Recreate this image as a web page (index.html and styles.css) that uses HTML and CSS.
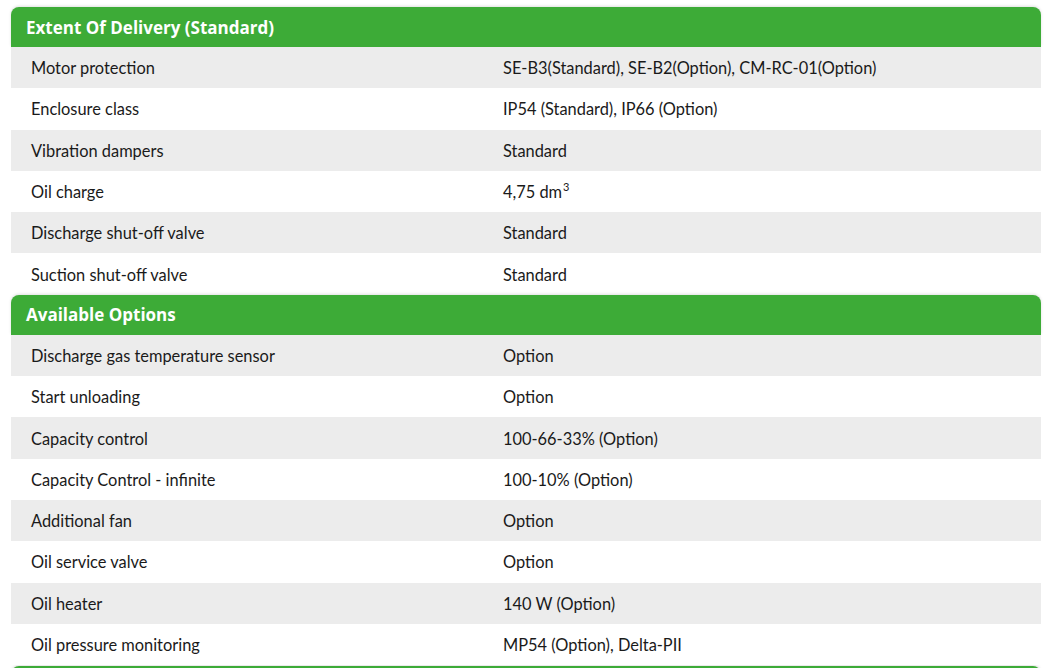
FILE: index.html
```html
<!DOCTYPE html>
<html lang="en">
<head>
<meta charset="utf-8">
<title>Specifications</title>
<link rel="stylesheet" href="styles.css">
</head>
<body>
<div class="page">
  <section class="spec">
    <h2 class="spec-head">Extent Of Delivery (Standard)</h2>
    <div class="row alt"><div class="label">Motor protection</div><div class="value">SE-B3(Standard), SE-B2(Option), CM-RC-01(Option)</div></div>
    <div class="row"><div class="label">Enclosure class</div><div class="value">IP54 (Standard), IP66 (Option)</div></div>
    <div class="row alt"><div class="label">Vibration dampers</div><div class="value">Standard</div></div>
    <div class="row"><div class="label">Oil charge</div><div class="value">4,75 dm<sup>3</sup></div></div>
    <div class="row alt"><div class="label">Discharge shut-off valve</div><div class="value">Standard</div></div>
    <div class="row"><div class="label">Suction shut-off valve</div><div class="value">Standard</div></div>
  </section>
  <section class="spec">
    <h2 class="spec-head">Available Options</h2>
    <div class="row alt"><div class="label">Discharge gas temperature sensor</div><div class="value">Option</div></div>
    <div class="row"><div class="label">Start unloading</div><div class="value">Option</div></div>
    <div class="row alt"><div class="label">Capacity control</div><div class="value">100-66-33% (Option)</div></div>
    <div class="row"><div class="label">Capacity Control - infinite</div><div class="value">100-10% (Option)</div></div>
    <div class="row alt"><div class="label">Additional fan</div><div class="value">Option</div></div>
    <div class="row"><div class="label">Oil service valve</div><div class="value">Option</div></div>
    <div class="row alt"><div class="label">Oil heater</div><div class="value">140 W (Option)</div></div>
    <div class="row"><div class="label">Oil pressure monitoring</div><div class="value">MP54 (Option), Delta-PII</div></div>
  </section>
  <div class="spec-next"></div>
</div>
</body>
</html>
```

FILE: styles.css
```css
html, body {
  margin: 0;
  padding: 0;
  background: #ffffff;
}
body {
  font-family: Lato, "Noto Sans", sans-serif;
  font-size: 16.4px;
  color: #1a1a1a;
  height: 668px;
  overflow: hidden;
}
.page {
  padding: 7px 11px 0 11px;
  width: 1030px;
}
.spec {
  display: flex;
  flex-direction: column;
}
.spec-head {
  margin: 0;
  height: 40px;
  display: flex;
  align-items: center;
  padding-left: 15px;
  background: #3dab37;
  color: #ffffff;
  font-family: "Open Sans", "Noto Sans", sans-serif;
  font-size: 17px;
  font-weight: 700;
  border-radius: 8px 8px 0 0;
  box-shadow: 0 -1px 3px rgba(0,0,0,0.12);
}
.spec-next {
  height: 40px;
  margin-top: 1px;
  background: #3dab37;
  border-radius: 8px 8px 0 0;
  box-shadow: 0 -1px 3px rgba(0,0,0,0.12);
}
.row {
  display: grid;
  grid-template-columns: 472px 1fr;
  height: 41.3px;
  align-items: center;
  background: #ffffff;
}
.row.alt {
  background: #ececec;
}
.label,
.value {
  padding-left: 20px;
}
sup {
  font-size: 11px;
  vertical-align: 7px;
  line-height: 0;
  margin-left: 1px;
}
```
